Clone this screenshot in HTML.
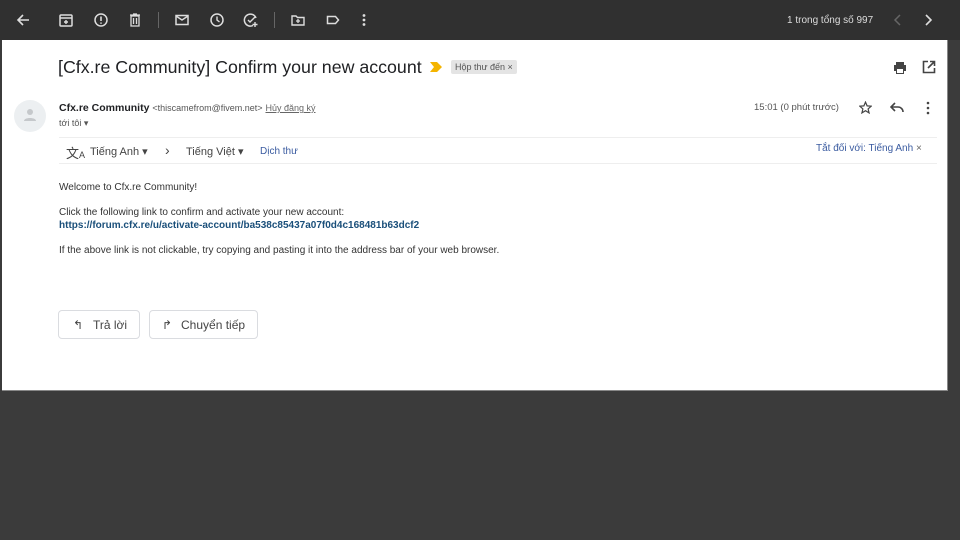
<!DOCTYPE html>
<html><head><meta charset="utf-8"><style>
*{margin:0;padding:0;box-sizing:border-box}
body{width:960px;height:540px;background:#3b3b3b;font-family:"Liberation Sans",sans-serif;position:relative;overflow:hidden}
.top{position:absolute;left:0;top:0;width:960px;height:40px;background:#303030}
.ic{position:absolute;top:12px}
svg{display:block}
.panel{position:absolute;left:2px;top:40px;width:946px;height:351px;background:#fff;border-right:1px solid #888;border-bottom:1px solid #888}
.t{position:absolute;white-space:nowrap}
.btn{position:absolute;top:270px;height:29px;border:1px solid #dadce0;border-radius:4px;font-size:12px;color:#444}
</style></head><body>
<div class="top">
<svg class="ic" style="left:15px" width="16" height="16" viewBox="0 0 16 16"><path d="M14 8H3M8 3L3 8l5 5" stroke="#ddd" stroke-width="1.6" fill="none"/></svg>
<svg class="ic" style="left:58px" width="16" height="16" viewBox="0 0 16 16"><rect x="2" y="3" width="12" height="11" rx="1" stroke="#ddd" stroke-width="1.5" fill="none"/><path d="M2 6h12M8 8v4M6 10h4" stroke="#ddd" stroke-width="1.4"/></svg>
<svg class="ic" style="left:93px" width="16" height="16" viewBox="0 0 16 16"><circle cx="8" cy="8" r="6" stroke="#ddd" stroke-width="1.5" fill="none"/><path d="M8 4.5v4.5M8 10.5v1.2" stroke="#ddd" stroke-width="1.6"/></svg>
<svg class="ic" style="left:127px" width="16" height="16" viewBox="0 0 16 16"><path d="M4 4h8v10H4zM3 3h10M6 2h4M6.5 6v6M9.5 6v6" stroke="#ddd" stroke-width="1.3" fill="none"/></svg>
<div style="position:absolute;left:158px;top:12px;width:1px;height:16px;background:#666"></div>
<svg class="ic" style="left:174px" width="16" height="16" viewBox="0 0 16 16"><rect x="2" y="3.5" width="12" height="9" stroke="#ddd" stroke-width="1.5" fill="none"/><path d="M2 4l6 4 6-4" stroke="#ddd" stroke-width="1.4" fill="none"/></svg>
<svg class="ic" style="left:209px" width="16" height="16" viewBox="0 0 16 16"><circle cx="8" cy="8" r="6" stroke="#ddd" stroke-width="1.5" fill="none"/><path d="M8 4.5V8l2.5 2" stroke="#ddd" stroke-width="1.4" fill="none"/></svg>
<svg class="ic" style="left:243px" width="16" height="16" viewBox="0 0 16 16"><path d="M13 6A6 6 0 1 0 10 13.5" stroke="#ddd" stroke-width="1.5" fill="none"/><path d="M5 8l2 2 5-5M12 10v5M9.5 12.5h5" stroke="#ddd" stroke-width="1.4" fill="none"/></svg>
<div style="position:absolute;left:274px;top:12px;width:1px;height:16px;background:#666"></div>
<svg class="ic" style="left:290px" width="16" height="16" viewBox="0 0 16 16"><path d="M2 4h4l1.5 1.5H14V13H2z" stroke="#ddd" stroke-width="1.4" fill="none"/><path d="M8 7v4M6 9h4" stroke="#ddd" stroke-width="1.3"/></svg>
<svg class="ic" style="left:325px" width="16" height="16" viewBox="0 0 16 16"><path d="M2.5 4.5h8l3 3.5-3 3.5h-8z" stroke="#ddd" stroke-width="1.5" fill="none"/></svg>
<svg class="ic" style="left:356px" width="16" height="16" viewBox="0 0 16 16"><circle cx="8" cy="3.5" r="1.4" fill="#ddd"/><circle cx="8" cy="8" r="1.4" fill="#ddd"/><circle cx="8" cy="12.5" r="1.4" fill="#ddd"/></svg>
<div class="t" style="left:787px;top:15px;font-size:10px;color:#ddd">1 trong tổng số 997</div>
<svg class="ic" style="left:890px" width="16" height="16" viewBox="0 0 16 16"><path d="M10 3L5 8l5 5" stroke="#666" stroke-width="1.5" fill="none"/></svg>
<svg class="ic" style="left:920px" width="16" height="16" viewBox="0 0 16 16"><path d="M6 3l5 5-5 5" stroke="#ddd" stroke-width="1.6" fill="none"/></svg>
</div>
<div class="panel">
<div class="t" style="left:56px;top:17px;font-size:17.8px;color:#202124">[Cfx.re Community] Confirm your new account</div>
<svg style="position:absolute;left:428px;top:22px" width="12" height="10" viewBox="0 0 12 10"><path d="M0 0h7l5 5-5 5H0l4-5z" fill="#f4b400"/></svg>
<div class="t" style="left:449px;top:20px;height:14px;padding:0 4px;background:#e4e4e4;border-radius:2px;font-size:9px;line-height:14px;color:#555">Hộp thư đến ×</div>
<svg style="position:absolute;left:891px;top:21px" width="14" height="14" viewBox="0 0 14 14"><path d="M3 1h8v3H3zM1 4h12v6h-2v3H3v-3H1z" fill="#444"/><rect x="4" y="8" width="6" height="4" fill="#fff"/></svg>
<svg style="position:absolute;left:920px;top:20px" width="14" height="14" viewBox="0 0 14 14"><path d="M6 1.5H1.5v11h11V8M8 1.5h4.5V6M12.5 1.5L6 8" stroke="#444" stroke-width="1.6" fill="none"/></svg>
<div style="position:absolute;left:12px;top:60px;width:32px;height:32px;border-radius:50%;background:#eceff1"></div>
<svg style="position:absolute;left:22px;top:68px" width="12" height="14" viewBox="0 0 12 14"><circle cx="6" cy="4" r="3" fill="#c5c8cb"/><path d="M0 13c0-4 12-4 12 0z" fill="#c5c8cb"/></svg>
<div class="t" style="left:57px;top:62px;font-size:10.5px;color:#202124"><b>Cfx.re Community</b> <span style="font-size:9px;color:#555">&lt;thiscamefrom@fivem.net&gt;</span> <span style="font-size:9px;color:#666;text-decoration:underline">Hủy đăng ký</span></div>
<div class="t" style="left:57px;top:78px;font-size:9px;color:#555">tới tôi ▾</div>
<div class="t" style="left:752px;top:62px;font-size:9.5px;color:#555">15:01 (0 phút trước)</div>
<svg style="position:absolute;left:857px;top:61px" width="13" height="13" viewBox="0 0 24 24"><path d="M12 2l3 7 7.5.6-5.7 5 1.8 7.4L12 18l-6.6 4 1.8-7.4-5.7-5L9 9z" stroke="#444" stroke-width="2.2" fill="none"/></svg>
<svg style="position:absolute;left:888px;top:61px" width="14" height="13" viewBox="0 0 14 13"><path d="M5 2L1 6l4 4M1 6h7a5 5 0 0 1 5 5" stroke="#444" stroke-width="1.6" fill="none"/></svg>
<svg style="position:absolute;left:920px;top:61px" width="12" height="14" viewBox="0 0 12 14"><circle cx="6" cy="2" r="1.3" fill="#444"/><circle cx="6" cy="7" r="1.3" fill="#444"/><circle cx="6" cy="12" r="1.3" fill="#444"/></svg>
<div style="position:absolute;left:57px;top:97px;width:878px;height:1px;background:#eee"></div>
<div style="position:absolute;left:57px;top:123px;width:878px;height:1px;background:#eee"></div>
<div class="t" style="left:64px;top:103px;font-size:13px;color:#444">文<span style="font-size:9px">A</span></div>
<div class="t" style="left:88px;top:105px;font-size:11px;color:#444">Tiếng Anh ▾</div>
<div class="t" style="left:163px;top:102px;font-size:14px;color:#444">›</div>
<div class="t" style="left:184px;top:105px;font-size:11px;color:#444">Tiếng Việt ▾</div>
<div class="t" style="left:258px;top:106px;font-size:10px;color:#3a5ba0">Dịch thư</div>
<div class="t" style="left:814px;top:103px;font-size:10px;color:#3a5ba0">Tắt đối với: Tiếng Anh <span style="color:#666">×</span></div>
<div class="t" style="left:57px;top:142px;font-size:10px;color:#333">Welcome to Cfx.re Community!</div>
<div class="t" style="left:57px;top:167px;font-size:10px;color:#333">Click the following link to confirm and activate your new account:</div>
<div class="t" style="left:57px;top:180px;font-size:10px;color:#1a4f7a;font-weight:bold">https://forum.cfx.re/u/activate-account/ba538c85437a07f0d4c168481b63dcf2</div>
<div class="t" style="left:57px;top:205px;font-size:10px;color:#333">If the above link is not clickable, try copying and pasting it into the address bar of your web browser.</div>
<div class="btn" style="left:56px;width:82px"><span class="t" style="left:14px;top:7px">↰</span><span class="t" style="left:34px;top:7px">Trả lời</span></div>
<div class="btn" style="left:147px;width:109px"><span class="t" style="left:12px;top:7px">↱</span><span class="t" style="left:31px;top:7px">Chuyển tiếp</span></div>
</div>
</body></html>
